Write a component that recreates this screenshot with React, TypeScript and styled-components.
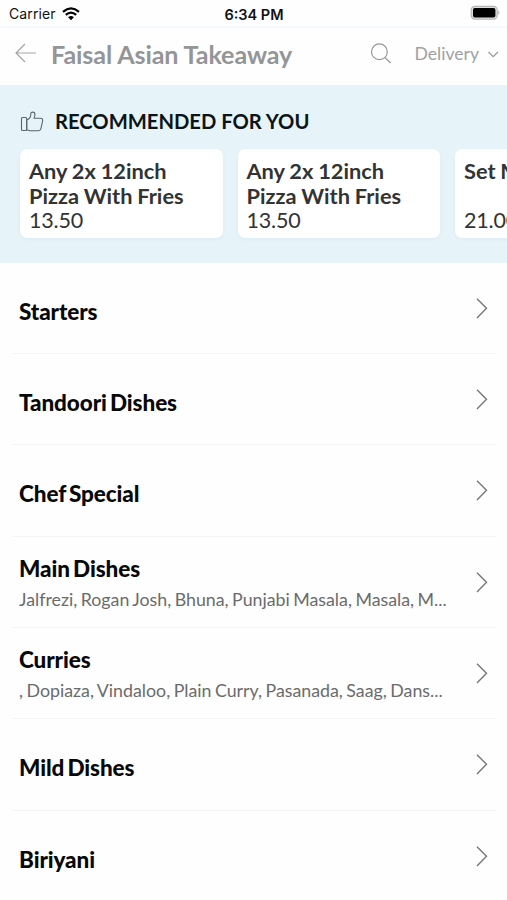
import React from 'react'
import styled, { createGlobalStyle } from 'styled-components'

interface Offer {
  name: string
  price: string
}

interface Category {
  title: string
  dishes?: string
}

const offers: Offer[] = [
  { name: 'Any 2x 12inch Pizza With Fries', price: '13.50' },
  { name: 'Any 2x 12inch Pizza With Fries', price: '13.50' },
  { name: 'Set Meal', price: '21.00' },
]

const categories: Category[] = [
  { title: 'Starters' },
  { title: 'Tandoori Dishes' },
  { title: 'Chef Special' },
  {
    title: 'Main Dishes',
    dishes: 'Jalfrezi, Rogan Josh, Bhuna, Punjabi Masala, Masala, M...',
  },
  {
    title: 'Curries',
    dishes: ', Dopiaza, Vindaloo, Plain Curry, Pasanada, Saag, Dans...',
  },
  { title: 'Mild Dishes' },
  { title: 'Biriyani' },
]

const GlobalStyle = createGlobalStyle`
  * {
    box-sizing: border-box;
  }

  body {
    margin: 0;
    background: #fefefe;
    font-family: Lato, 'Liberation Sans', sans-serif;
  }
`

const Screen = styled.main`
  display: flex;
  flex-direction: column;
  height: 900px;
  overflow: hidden;

  > * {
    flex-shrink: 0;
  }
`

const StatusBar = styled.div`
  display: grid;
  grid-template-columns: 1fr auto 1fr;
  align-items: center;
  height: 28px;
  padding: 0 6px 2px 9px;
  font-family: Inter, sans-serif;
  font-size: 14px;
  color: #111;
`

const Carrier = styled.div`
  display: flex;
  align-items: center;
  gap: 6px;
  padding-top: 1px;
  letter-spacing: 0.1px;
`

const Clock = styled.div`
  margin-right: 2px;
  padding-top: 2px;
  font-size: 14.5px;
  font-weight: 600;
`

const Battery = styled.svg`
  justify-self: end;
`

const Header = styled.header`
  display: flex;
  align-items: center;
  height: 57px;
  padding: 0 8px 7px 15px;
  box-shadow: 0 0 4px #e3f2f9;
  color: #949597;
`

const Title = styled.h1`
  flex: 1;
  margin: 1px 0 0 14px;
  font-size: 25.1px;
  font-weight: 700;
  line-height: 30px;
  letter-spacing: -0.1px;
  white-space: nowrap;
`

const Delivery = styled.div`
  display: flex;
  align-items: center;
  gap: 8px;
  margin: 1px 0 0 23px;
  font-size: 17.6px;
  color: #a0a1a3;
`

const Recommended = styled.section`
  height: 177.6px;
  padding: 22px 0 0 20px;
  background: #e6f3f9;
  overflow: hidden;
`

const RecommendedTitle = styled.h2`
  display: flex;
  align-items: center;
  gap: 11px;
  height: 28px;
  margin: 0 0 13.5px;
  font-size: 20.2px;
  font-weight: 700;
  color: #0c1417;
`

const Offers = styled.div`
  display: flex;
  gap: 15px;
`

const OfferCard = styled.article`
  display: flex;
  flex: 0 0 202.5px;
  flex-direction: column;
  justify-content: space-between;
  height: 89.5px;
  padding: 9px 30px 6px 9px;
  border-radius: 7px;
  background: #fff;
  box-shadow: 0 1px 3px rgba(130, 170, 180, 0.1);
  color: #333;
`

const OfferName = styled.div`
  font-size: 21.8px;
  font-weight: 700;
  line-height: 25.5px;
  word-spacing: -0.5px;
`

const OfferPrice = styled.div`
  font-size: 21.5px;
  line-height: 23px;
  letter-spacing: -0.2px;
`

const CategoryList = styled.ul`
  margin: 0;
  padding: 0 11px 0 12px;
  list-style: none;
`

const CategoryRow = styled.li`
  display: flex;
  align-items: center;
  justify-content: space-between;
  height: 91.35px;
  padding: 0 7px;
  border-bottom: 1px solid #f4f4f4;
`

const CategoryText = styled.div<{ $single: boolean }>`
  padding-top: ${({ $single }) => ($single ? '8px' : '3px')};
  white-space: nowrap;
`

const CategoryTitle = styled.div`
  font-size: 22.5px;
  font-weight: 900;
  line-height: 28px;
  letter-spacing: -0.1px;
  word-spacing: -2px;
  color: #090909;
`

const Dishes = styled.div`
  margin-top: 3px;
  font-size: 17.8px;
  line-height: 26px;
  word-spacing: -1.1px;
  color: #6b6b6b;
`

const WifiIcon = () => (
  <svg width="18" height="14" viewBox="0 0 18 14" fill="none" stroke="#000">
    <path d="M1 4.8Q9 -2 17 4.8" strokeWidth="2.3" />
    <path d="M3.8 7.9Q9 3.4 14.2 7.9" strokeWidth="2.2" />
    <path d="M6.1 10.2Q9 7.8 11.9 10.2L9 13.3Z" fill="#000" stroke="none" />
  </svg>
)

const BatteryIcon = () => (
  <Battery width="31" height="16" viewBox="0 0 31 16">
    <rect x="1.2" y="1.4" width="26" height="12.8" rx="3.6" fill="#ddd" stroke="#b5b5b5" strokeWidth="1.1" />
    <rect x="3" y="3" width="22.4" height="9.6" rx="1.8" fill="#000" />
    <path d="M28.4 5.5Q30.5 7.7 28.4 9.9Z" fill="#a5a5a5" />
  </Battery>
)

const BackIcon = () => (
  <svg width="22" height="20" viewBox="0 0 22 20" fill="none" stroke="#a3a3a3" strokeWidth="1.2">
    <path d="M10 1L1 10L10 19M1 10H21" />
  </svg>
)

const SearchIcon = () => (
  <svg width="21" height="21" viewBox="0 0 21 21" fill="none" stroke="#999" strokeWidth="1.2">
    <circle cx="9.4" cy="8.8" r="7.9" />
    <path d="M15 14.5L20.6 20" />
  </svg>
)

const ChevronDown = () => (
  <svg width="12" height="8" viewBox="0 0 12 8" fill="none" stroke="#999" strokeWidth="1.2">
    <path d="M1.5 2L6.2 6.7L10.9 2" />
  </svg>
)

const ChevronRight = () => (
  <svg width="14" height="22" viewBox="0 0 14 22" fill="none" stroke="#777" strokeWidth="1.4">
    <path d="M2 1.7L11.5 11.3L2 20.9" />
  </svg>
)

const ThumbIcon = () => (
  <svg width="24" height="22" viewBox="0 0 24 22" fill="none" stroke="#59666c" strokeWidth="1.1" strokeLinejoin="round">
    <rect x="1.5" y="7.5" width="5.2" height="13" rx="1" />
    <path d="M6.7 10C9.5 9 11 6.9 10.8 3.7C10.7 1.6 14.9 1.3 14.9 4.6C14.9 6.2 14.4 7.2 14 8.2H20.2C22.3 8.2 22.9 9.5 22.6 11L20.9 18.7C20.6 20.1 19.8 20.7 18.5 20.7H10C8.5 20.7 7.8 20 6.7 19.7Z" />
  </svg>
)

const App = (): React.JSX.Element => {
  return (
    <>
      <GlobalStyle />
      <Screen>
        <StatusBar>
          <Carrier>
            Carrier
            <WifiIcon />
          </Carrier>
          <Clock>6:34 PM</Clock>
          <BatteryIcon />
        </StatusBar>
        <Header>
          <BackIcon />
          <Title>Faisal Asian Takeaway</Title>
          <SearchIcon />
          <Delivery>
            Delivery
            <ChevronDown />
          </Delivery>
        </Header>
        <Recommended>
          <RecommendedTitle>
            <ThumbIcon />
            RECOMMENDED FOR YOU
          </RecommendedTitle>
          <Offers>
            {offers.map((offer, index) => (
              <OfferCard key={index}>
                <OfferName>{offer.name}</OfferName>
                <OfferPrice>{offer.price}</OfferPrice>
              </OfferCard>
            ))}
          </Offers>
        </Recommended>
        <CategoryList>
          {categories.map(({ title, dishes }) => (
            <CategoryRow key={title}>
              <CategoryText $single={!dishes}>
                <CategoryTitle>{title}</CategoryTitle>
                {dishes && <Dishes>{dishes}</Dishes>}
              </CategoryText>
              <ChevronRight />
            </CategoryRow>
          ))}
        </CategoryList>
      </Screen>
    </>
  )
}

export default App
